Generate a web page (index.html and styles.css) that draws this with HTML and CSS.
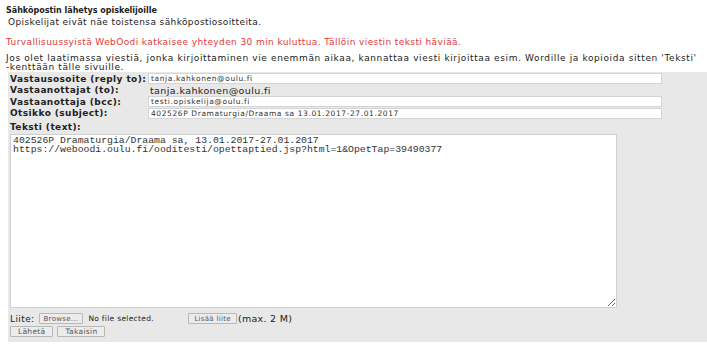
FILE: index.html
```html
<!DOCTYPE html>
<html>
<head>
  <meta charset="UTF-8">
  <title>Sähköpostin lähetys opiskelijoille</title>
  <link rel="stylesheet" href="styles.css">
</head>
<body>
  <h1 class="title">Sähköpostin lähetys opiskelijoille</h1>
  <p class="note">Opiskelijat eivät näe toistensa sähköpostiosoitteita.</p>
  <p class="warning">Turvallisuussyistä WebOodi katkaisee yhteyden 30 min kuluttua. Tällöin viestin teksti häviää.</p>
  <p class="info">Jos olet laatimassa viestiä, jonka kirjoittaminen vie enemmän aikaa, kannattaa viesti kirjoittaa esim. Wordille ja kopioida sitten 'Teksti'<br>-kenttään tälle sivuille.</p>

  <form class="panel" onsubmit="event.preventDefault();">
    <div class="row">
      <label class="lbl" for="replyTo">Vastausosoite (reply to):</label>
      <input class="field" type="text" id="replyTo" value="tanja.kahkonen@oulu.fi">
    </div>
    <div class="row">
      <span class="lbl">Vastaanottajat (to):</span>
      <span class="plain">tanja.kahkonen@oulu.fi</span>
    </div>
    <div class="row">
      <label class="lbl" for="bcc">Vastaanottaja (bcc):</label>
      <input class="field" type="text" id="bcc" value="testi.opiskelija@oulu.fi">
    </div>
    <div class="row">
      <label class="lbl" for="subject">Otsikko (subject):</label>
      <input class="field" type="text" id="subject" value="402526P Dramaturgia/Draama sa 13.01.2017-27.01.2017">
    </div>
    <label class="lbl text-lbl" for="body">Teksti (text):</label>
    <textarea class="body" id="body">402526P Dramaturgia/Draama sa, 13.01.2017-27.01.2017
https://weboodi.oulu.fi/ooditesti/opettaptied.jsp?html=1&amp;OpetTap=39490377</textarea>
    <div class="attach">
      <span>Liite:</span>
      <button type="button" class="btn browse">Browse...</button>
      <span class="nofile">No file selected.</span>
      <button type="button" class="btn add">Lisää liite</button>
      <span class="max">(max. 2 M)</span>
    </div>
    <div class="actions">
      <button type="submit" class="btn">Lähetä</button>
      <button type="button" class="btn">Takaisin</button>
    </div>
  </form>
</body>
</html>
```

FILE: styles.css
```css
body {
  margin: 0;
  padding: 6px 0 0 6px;
  font-family: "DejaVu Sans", Verdana, sans-serif;
  font-size: 9px;
  letter-spacing: 0.4px;
  color: #222;
  background: #fff;
}
.title {
  font-size: 8px;
  letter-spacing: 0;
  font-weight: bold;
  margin: 0;
  line-height: 10px;
}
.note {
  margin: 0 0 0 2px;
  line-height: 12px;
}
.warning {
  color: #e03a3a;
  margin: 8px 0 0 0;
  line-height: 12px;
}
.info {
  margin: 6px 0 0 0;
  line-height: 9px;
  letter-spacing: 0.62px;
}
.panel {
  background: #e8e8e8;
  margin: 0 0 0 2px;
  padding: 1px 45px 4px 2px;
}
.row {
  display: flex;
  align-items: center;
  height: 11.5px;
}
.lbl {
  display: block;
  width: 138px;
  font-weight: bold;
  letter-spacing: 0.42px;
  flex-shrink: 0;
}
.field {
  flex: 1;
  height: 11px;
  box-sizing: border-box;
  border: 1px solid #d4d4d4;
  background: #fff;
  font-family: "DejaVu Sans", Verdana, sans-serif;
  font-size: 7.5px;
  letter-spacing: 0.6px;
  padding: 0 2px;
  margin: 0;
  color: #333;
}
.plain {
  font-size: 9.5px;
  letter-spacing: 0.4px;
  padding-left: 2px;
}
.text-lbl {
  margin-top: 3px;
  line-height: 11px;
}
.body {
  display: block;
  width: 607px;
  height: 174px;
  box-sizing: border-box;
  margin: 1px 0 0 0;
  border: 1px solid #cfcfcf;
  font-family: "Liberation Mono", "Courier New", monospace;
  font-size: 9.8px;
  letter-spacing: 0;
  line-height: 9px;
  padding: 1px 2px;
  resize: both;
  color: #333;
}
.attach, .actions {
  display: flex;
  align-items: center;
  gap: 4px;
  height: 13px;
}
.attach {
  margin-top: 4px;
}
.actions {
  margin-top: 0;
}
.btn {
  font-family: "DejaVu Sans", Verdana, sans-serif;
  font-size: 7.5px;
  letter-spacing: 0.3px;
  height: 11px;
  padding: 0 7px;
  border: 1px solid #b8b8b8;
  background: #ececec;
  color: #555;
  border-radius: 1px;
}
.browse {
  padding: 0 4px;
  font-size: 7px;
}
.add {
  padding: 0 5px;
  font-size: 7px;
}
.nofile {
  font-size: 7.5px;
  letter-spacing: 0.3px;
  margin-left: 1px;
  width: 96px;
}
.max {
  font-size: 9.5px;
  letter-spacing: 0.3px;
  margin-left: -3px;
}
```
